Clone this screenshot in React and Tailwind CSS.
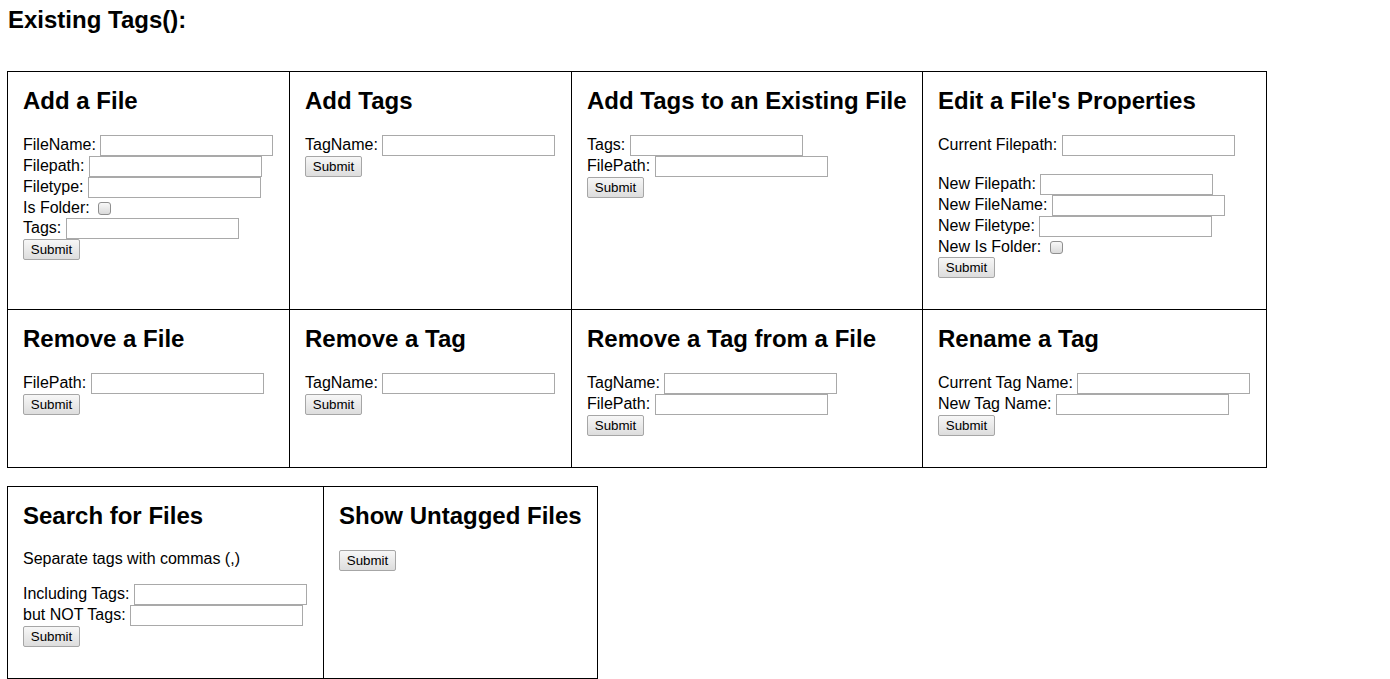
import React from "react";

function TextInput() {
  return (
    <input
      type="text"
      className="ml-[4.5px] box-border h-[21px] w-[173px] border border-[#a9a9a9] bg-white px-[2px] text-[13.33px] outline-none"
    />
  );
}

function Row({ label }) {
  return (
    <div className="flex h-[21px] items-center whitespace-nowrap">
      <span className="-mt-[1px]">{label}</span>
      <TextInput />
    </div>
  );
}

function CheckRow({ label }) {
  return (
    <div className="flex h-[20px] items-center whitespace-nowrap">
      <span className="-mt-[1px]">{label}</span>
      <span className="ml-[8.5px] inline-block h-[13px] w-[13px] rounded-[3px] border border-[#8f8f8f] bg-linear-to-b from-[#f8f8f8] to-[#dadada]" />
    </div>
  );
}

function SubmitButton() {
  return (
    <button
      type="button"
      className="box-border flex h-[21px] w-[57px] items-center justify-center rounded-[2px] border border-[#a6a6a6] bg-linear-to-b from-[#f7f7f7] to-[#dddddd] text-[13.33px] leading-none text-black"
    >
      Submit
    </button>
  );
}

function Cell({ title, children }) {
  return (
    <div className="border-r border-b border-black p-[15px]">
      <h2 className="mb-[20px] whitespace-nowrap text-[24px] font-bold leading-[28px]">{title}</h2>
      <div className="mb-[16px]">{children}</div>
    </div>
  );
}

export default function App() {
  return (
    <div className="min-h-[679px] bg-white text-[16px] text-black font-['Liberation_Sans',Arial,sans-serif]">
      <h2 className="ml-[8px] pt-[6px] text-[24px] font-bold leading-[28px]">Existing Tags():</h2>

      <div className="ml-[7px] mt-[37px] grid w-fit grid-cols-[282px_282px_351px_344px] border-l border-t border-black">
        <Cell title="Add a File">
          <Row label="FileName:" />
          <Row label="Filepath:" />
          <Row label="Filetype:" />
          <CheckRow label="Is Folder:" />
          <Row label="Tags:" />
          <SubmitButton />
        </Cell>
        <Cell title="Add Tags">
          <Row label="TagName:" />
          <SubmitButton />
        </Cell>
        <Cell title="Add Tags to an Existing File">
          <Row label="Tags:" />
          <Row label="FilePath:" />
          <SubmitButton />
        </Cell>
        <Cell title="Edit a File's Properties">
          <Row label="Current Filepath:" />
          <div className="h-[18px]" />
          <Row label="New Filepath:" />
          <Row label="New FileName:" />
          <Row label="New Filetype:" />
          <CheckRow label="New Is Folder:" />
          <SubmitButton />
        </Cell>

        <Cell title="Remove a File">
          <Row label="FilePath:" />
          <SubmitButton />
        </Cell>
        <Cell title="Remove a Tag">
          <Row label="TagName:" />
          <SubmitButton />
        </Cell>
        <Cell title="Remove a Tag from a File">
          <Row label="TagName:" />
          <Row label="FilePath:" />
          <SubmitButton />
        </Cell>
        <Cell title="Rename a Tag">
          <Row label="Current Tag Name:" />
          <Row label="New Tag Name:" />
          <SubmitButton />
        </Cell>
      </div>

      <div className="ml-[7px] mt-[18px] grid w-fit grid-cols-[316px_274px] border-l border-t border-black">
        <Cell title="Search for Files">
          <p className="mb-[16px] h-[18px] leading-[18px]">Separate tags with commas (,)</p>
          <Row label="Including Tags:" />
          <Row label="but NOT Tags:" />
          <SubmitButton />
        </Cell>
        <Cell title="Show Untagged Files">
          <SubmitButton />
        </Cell>
      </div>
    </div>
  );
}
